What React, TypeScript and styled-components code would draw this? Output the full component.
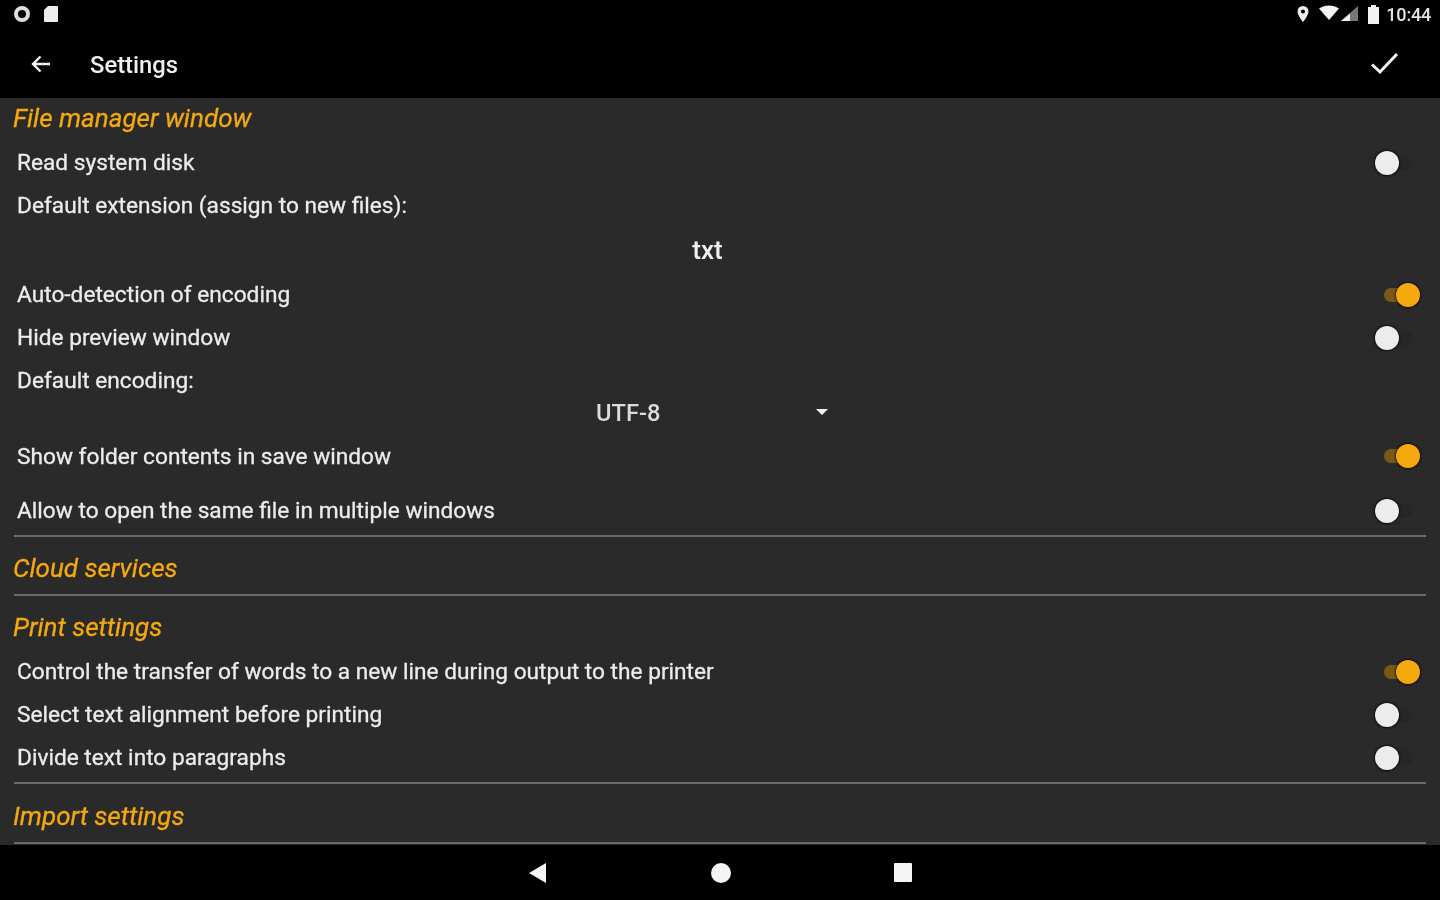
import React from 'react';
import styled, { createGlobalStyle } from 'styled-components';

const ACCENT = '#f5a90f';
const PANEL = '#2a2a2a';
const TEXT = '#ececec';

const GlobalStyle = createGlobalStyle`
  html, body {
    margin: 0;
    padding: 0;
    background: #000;
    font-family: Roboto, "Liberation Sans", sans-serif;
  }
`;

// the reference is an upscaled phone capture, so everything is slightly soft
const Screen = styled.div`
  width: 1440px;
  height: 900px;
  display: flex;
  flex-direction: column;
  overflow: hidden;
  background: ${PANEL};
  filter: blur(0.7px);
`;

const StatusBar = styled.div`
  height: 28px;
  background: #000;
  display: flex;
  align-items: center;
  justify-content: space-between;
  padding: 0 9px 0 13px;
  flex-shrink: 0;
`;

const StatusGroup = styled.div<{ $gap: number }>`
  display: flex;
  align-items: center;
  gap: ${p => p.$gap}px;
`;

const Clock = styled.span`
  font-size: 18px;
  font-weight: 500;
  color: #e4e4e4;
  margin-left: -1px;
  letter-spacing: -0.2px;
`;

const AppBar = styled.div`
  height: 70px;
  background: #000;
  display: flex;
  align-items: center;
  padding: 0 40px 0 29px;
  flex-shrink: 0;
`;

const AppTitle = styled.div`
  margin-left: 37px;
  flex: 1;
  font-size: 23.8px;
  font-weight: 500;
  color: #efefef;
  position: relative;
  top: 2px;
`;

const BarIcon = styled.svg`
  display: block;
  position: relative;
  top: 1px;
`;

const Content = styled.div`
  flex: 1;
  display: flex;
  flex-direction: column;
  padding: 0 14px;
`;

const SectionTitle = styled.div<{ $h: number; $top?: number; $bottom?: number }>`
  height: ${p => p.$h}px;
  box-sizing: border-box;
  padding-top: ${p => p.$top ?? 0}px;
  padding-bottom: ${p => p.$bottom ?? 0}px;
  margin-left: -1px;
  display: flex;
  align-items: center;
  font-size: 26px;
  font-style: italic;
  color: ${ACCENT};
  -webkit-text-stroke: 0.3px ${ACCENT};
`;

const Row = styled.div<{ $h: number }>`
  height: ${p => p.$h}px;
  display: flex;
  align-items: center;
  justify-content: space-between;
  padding-left: 3px;
  font-size: 22.7px;
  color: ${TEXT};
  -webkit-text-stroke: 0.3px ${TEXT};
`;

const Divider = styled.div<{ $before?: number }>`
  height: 2px;
  flex-shrink: 0;
  background: #6a6a6a;
  margin-top: ${p => p.$before ?? 0}px;
`;

const ValueRow = styled.div`
  height: 46px;
  display: flex;
  align-items: center;
  justify-content: center;
  font-size: 26px;
  font-weight: 500;
  color: #f0f0f0;
  padding-right: 25px;
`;

const SelectRow = styled.div`
  height: 22px;
  position: relative;
  display: flex;
  align-items: center;
  padding-left: 582px;
  font-size: 23.7px;
  font-weight: 500;
  color: #dcdcdc;
`;

const Caret = styled.span`
  position: absolute;
  left: 802px;
  top: 7px;
  width: 0;
  height: 0;
  border-left: 6px solid transparent;
  border-right: 6px solid transparent;
  border-top: 6px solid #f2f2f2;
`;

const Track = styled.div<{ $on: boolean }>`
  width: 28px;
  height: 14px;
  border-radius: 7px;
  position: relative;
  margin-right: 14px;
  background: ${p => (p.$on ? '#7a5a14' : '#262626')};
`;

const Thumb = styled.div<{ $on: boolean }>`
  position: absolute;
  top: -5px;
  left: ${p => (p.$on ? '12px' : '-9px')};
  width: 24px;
  height: 24px;
  border-radius: 50%;
  background: ${p => (p.$on ? ACCENT : '#ececec')};
  box-shadow: 0 0 2px 1px rgba(0, 0, 0, 0.7);
`;

const NavBar = styled.div`
  height: 55px;
  background: #000;
  display: flex;
  align-items: center;
  justify-content: center;
  gap: 163px;
  flex-shrink: 0;
`;

const Toggle = ({ on }: { on: boolean }) => (
  <Track $on={on}>
    <Thumb $on={on} />
  </Track>
);

const SettingRow = ({ label, on, h = 43 }: { label: string; on?: boolean; h?: number }) => (
  <Row $h={h}>
    <span>{label}</span>
    {on !== undefined && <Toggle on={on} />}
  </Row>
);

export default function App() {
  return (
    <Screen>
      <GlobalStyle />
      <StatusBar>
        <StatusGroup $gap={12}>
          <svg width="18" height="18" viewBox="0 0 18 18">
            <circle cx="9" cy="9" r="6" fill="none" stroke="#ddd" strokeWidth="4" />
          </svg>
          <svg width="16" height="16" viewBox="0 0 16 16">
            <path d="M5 0h9a1 1 0 0 1 1 1v14a1 1 0 0 1-1 1H2a1 1 0 0 1-1-1V4z" fill="#eee" />
          </svg>
        </StatusGroup>
        <StatusGroup $gap={8}>
          <svg width="14" height="18" viewBox="0 0 14 18">
            <path fillRule="evenodd" d="M7 1a5.500 5.500 0 0 0-5.500 5.500C1.500 10.500 7 17 7 17s5.500-6.500 5.500-10.500A5.500 5.500 0 0 0 7 1zm0 3.500a2 2 0 1 1 0 4 2 2 0 0 1 0-4z" fill="#eee" />
          </svg>
          <svg width="42" height="18" viewBox="0 0 42 18">
            <path d="M1 3.500C7 -0.500 15 -0.500 21 3.500L11 15z" fill="#f4f4f4" />
            <path d="M40 1v15H23z" fill="#777" />
            <path d="M32 8.500V16h-9z" fill="#eee" />
          </svg>
          <svg width="11" height="19" viewBox="0 0 11 19">
            <path d="M3 0h5v2h3v17H0V2h3z" fill="#f2f2f2" />
          </svg>
          <Clock>10:44</Clock>
        </StatusGroup>
      </StatusBar>
      <AppBar>
        <BarIcon width="24" height="24" viewBox="0 0 24 24">
          <path d="M21 12H4M11.500 4.500 4 12l7.500 7.500" fill="none" stroke="#f0f0f0" strokeWidth="2.400" />
        </BarIcon>
        <AppTitle>Settings</AppTitle>
        <BarIcon width="30" height="24" viewBox="0 0 30 24">
          <path d="M2 12.500 10 20 27 2" fill="none" stroke="#f4f4f4" strokeWidth="3" />
        </BarIcon>
      </AppBar>
      <Content>
        <SectionTitle $h={43} $bottom={3}>File manager window</SectionTitle>
        <SettingRow label="Read system disk" on={false} />
        <SettingRow label="Default extension (assign to new files):" />
        <ValueRow>txt</ValueRow>
        <SettingRow label="Auto-detection of encoding" on />
        <SettingRow label="Hide preview window" on={false} />
        <SettingRow label="Default encoding:" />
        <SelectRow>
          UTF-8
          <Caret />
        </SelectRow>
        <SettingRow label="Show folder contents in save window" on h={64} />
        <SettingRow label="Allow to open the same file in multiple windows" on={false} h={45} />
        <Divider $before={2} />
        <SectionTitle $h={57} $top={5}>Cloud services</SectionTitle>
        <Divider />
        <SectionTitle $h={54} $top={8}>Print settings</SectionTitle>
        <SettingRow label="Control the transfer of words to a new line during output to the printer" on />
        <SettingRow label="Select text alignment before printing" on={false} />
        <SettingRow label="Divide text into paragraphs" on={false} />
        <Divider $before={3} />
        <SectionTitle $h={58} $top={6}>Import settings</SectionTitle>
        <Divider />
      </Content>
      <NavBar>
        <svg width="20" height="20" viewBox="0 0 20 20">
          <path d="M1 10 18 0v20z" fill="#f5f5f5" />
        </svg>
        <svg width="20" height="20" viewBox="0 0 20 20">
          <circle cx="10" cy="10" r="10" fill="#f5f5f5" />
        </svg>
        <svg width="18" height="19" viewBox="0 0 18 19">
          <rect width="18" height="19" rx="1" fill="#f5f5f5" />
        </svg>
      </NavBar>
    </Screen>
  );
}
